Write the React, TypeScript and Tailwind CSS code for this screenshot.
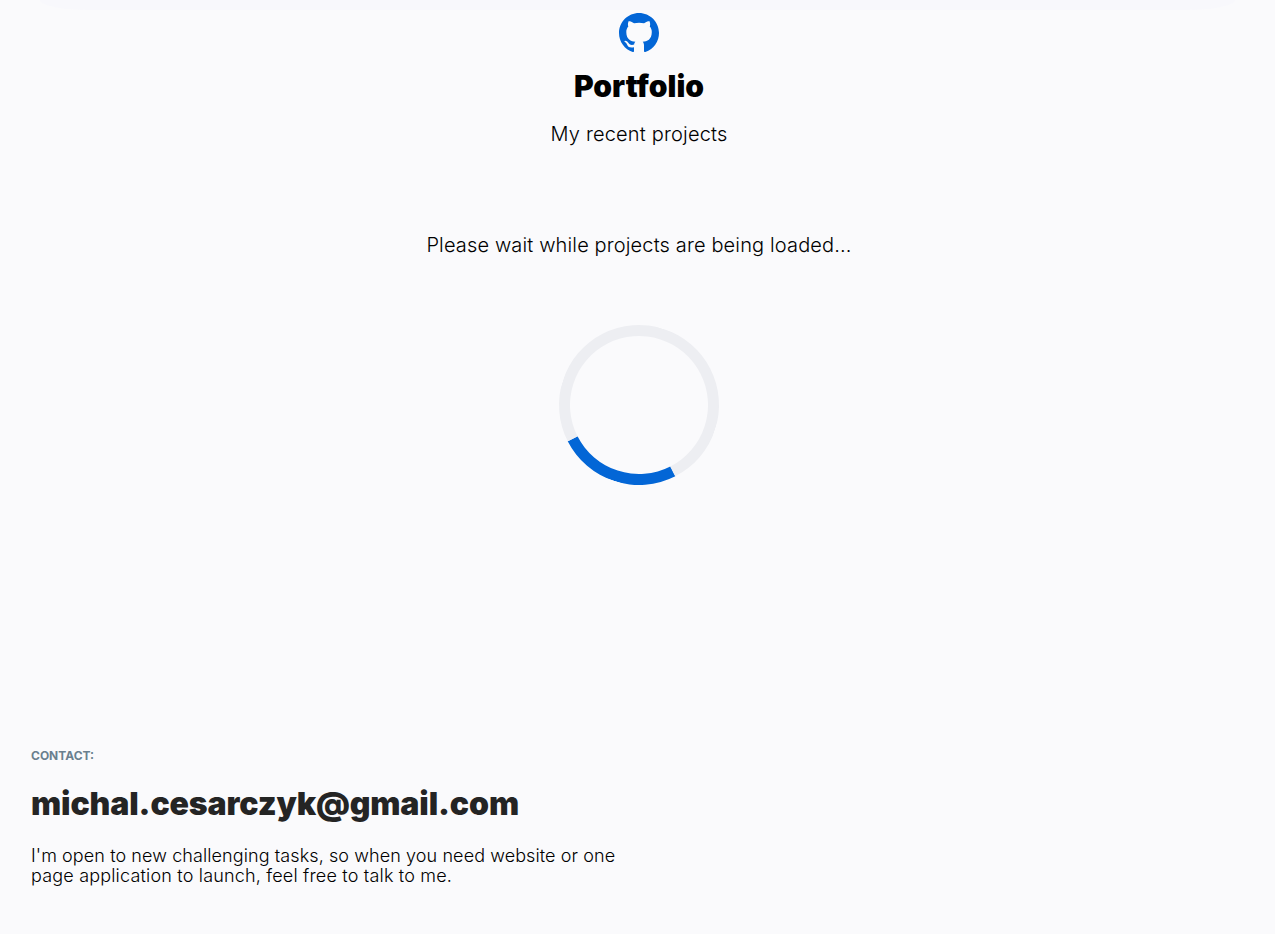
export default function App() {
  return (
    <div className="flex h-[934px] w-full flex-col bg-[#fafafc] font-['Inter',sans-serif] text-black">
      <div className="h-3 w-full shrink-0 overflow-hidden">
        <div className="mx-auto h-[10px] w-[1195px] bg-[#f8f8fc] [border-radius:0_0_50px_50px/0_0_10px_10px]" />
      </div>
      <header className="flex flex-col items-center pl-[3px]">
        <svg viewBox="0 0 16 16" className="mt-px size-10 fill-[#0366d6]" aria-hidden="true">
          <path d="M8 0C3.58 0 0 3.58 0 8c0 3.54 2.29 6.53 5.47 7.59.4.07.55-.17.55-.38 0-.19-.01-.82-.01-1.49-2.01.37-2.53-.49-2.69-.94-.09-.23-.48-.94-.82-1.13-.28-.15-.68-.52-.01-.53.63-.01 1.08.58 1.23.82.72 1.21 1.87.87 2.33.66.07-.52.28-.87.51-1.07-1.78-.2-3.64-.89-3.64-3.95 0-.87.31-1.59.82-2.15-.08-.2-.36-1.02.08-2.12 0 0 .67-.21 2.2.82a7.6 7.6 0 0 1 4 0c1.53-1.04 2.2-.82 2.2-.82.44 1.1.16 1.92.08 2.12.51.56.82 1.27.82 2.15 0 3.07-1.87 3.75-3.65 3.95.29.25.54.73.54 1.48 0 1.07-.01 1.93-.01 2.2 0 .21.15.46.55.38A8.01 8.01 0 0 0 16 8c0-4.42-3.58-8-8-8Z" />
        </svg>
        <h1 className="mt-[13px] text-[30px] leading-10 font-black">Portfolio</h1>
        <p className="mt-[13px] text-xl leading-[30px] font-light tracking-[0.18px]">My recent projects</p>
      </header>
      <main className="flex flex-col items-center pl-[3px]">
        <p className="mt-[81px] text-xl leading-[30px] font-light tracking-[0.14px]">Please wait while projects are being loaded...</p>
        <div className="mt-[65px] size-40 rotate-[198deg] rounded-full border-[11px] border-[#edeef2] border-t-[#0366d6]" />
      </main>
      <footer className="mt-[261px] pl-[31px]">
        <p className="text-xs leading-5 font-bold text-[#6a7f8e]">CONTACT:</p>
        <p className="mt-[18px] text-[32px] leading-10 font-black tracking-[-0.12px] text-[#242424]">michal.cesarczyk@gmail.com</p>
        <p className="mt-[22px] text-lg leading-5 font-light">
          <span className="block tracking-[0.09px]">I'm open to new challenging tasks, so when you need website or one</span>
          <span className="block tracking-[0.18px]">page application to launch, feel free to talk to me.</span>
        </p>
      </footer>
    </div>
  );
}
